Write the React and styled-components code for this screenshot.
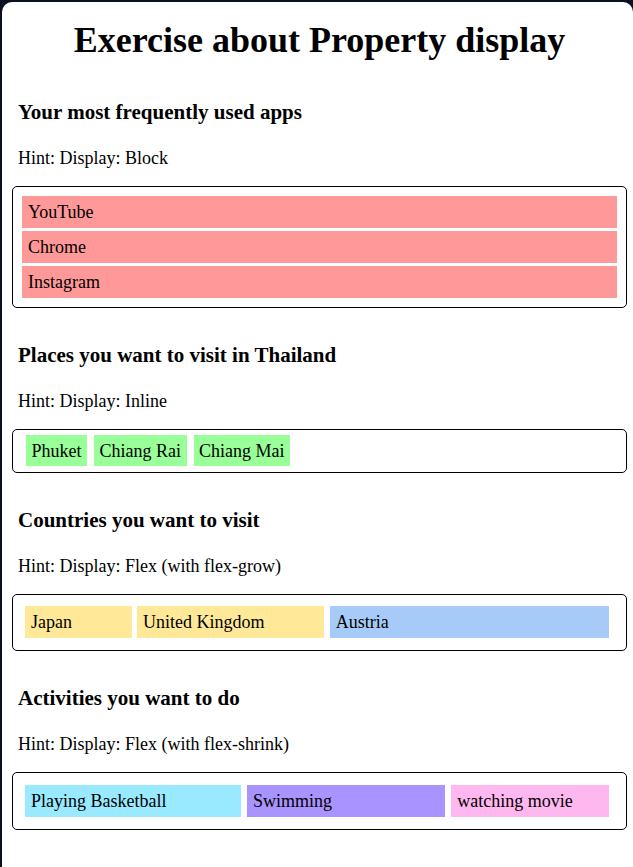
import styled, { createGlobalStyle } from "styled-components";

const GlobalStyle = createGlobalStyle`
	html, body {
		margin: 0;
		padding: 0;
		background: #0b1020;
	}
	body {
		font-family: "Liberation Serif", "Times New Roman", serif;
		font-size: 18px;
		color: #000;
	}
`;

const Page = styled.div`
	padding: 2px 0 0 2px;
	min-height: 100vh;
	box-sizing: border-box;
`;

const Card = styled.div`
	background: #fff;
	border-radius: 10px;
	padding: 18px 6px 30px 10px;
	min-height: 900px;
	box-sizing: border-box;
`;

const Title = styled.h1`
	font-size: 36px;
	font-weight: bold;
	text-align: center;
	margin: 0 0 39px;
	line-height: 41px;
`;

const SectionTitle = styled.h3`
	font-size: 21px;
	font-weight: bold;
	margin: ${(props) => (props.first ? "0" : "35px")} 0 24px 6px;
	line-height: 24px;
`;

const Hint = styled.p`
	font-size: 18px;
	margin: 0 0 18px 6px;
	line-height: 20px;
`;

const Box = styled.div`
	border: 1px solid #000;
	border-radius: 5px;
	padding: ${(props) => props.pad || "9px"};
	${(props) => props.flex && `display: flex; gap: ${props.gap || "6px"};`}
`;

const BlockItem = styled.div`
	display: block;
	background: #ff9999;
	line-height: 20px;
	padding: 6px 6px;
	margin-bottom: ${(props) => (props.last ? "0" : "3px")};
`;

const InlineRow = styled.div`
	display: flex;
	gap: 7px;
`;

const InlineItem = styled.span`
	display: inline-block;
	background: #99ff99;
	line-height: 20px;
	padding: 6px 5.5px 5px;
`;

const FlexItem = styled.div`
	background: ${(props) => props.bg};
	line-height: 20px;
	padding: 6px 6px;
	flex-grow: ${(props) => props.grow || 0};
	flex-shrink: ${(props) => props.shrink || 1};
	flex-basis: ${(props) => props.basis || "auto"};
	white-space: nowrap;
	overflow: hidden;
	min-width: 0;
`;

export default function App() {
	return (
		<>
			<GlobalStyle />
			<Page>
				<Card>
					<Title>Exercise about Property display</Title>

					<SectionTitle first>Your most frequently used apps</SectionTitle>
					<Hint>Hint: Display: Block</Hint>
					<Box>
						<BlockItem>YouTube</BlockItem>
						<BlockItem>Chrome</BlockItem>
						<BlockItem last>Instagram</BlockItem>
					</Box>

					<SectionTitle>Places you want to visit in Thailand</SectionTitle>
					<Hint>Hint: Display: Inline</Hint>
					<Box pad="5px 13px 6px">
						<InlineRow>
							<InlineItem>Phuket</InlineItem>
							<InlineItem>Chiang Rai</InlineItem>
							<InlineItem>Chiang Mai</InlineItem>
						</InlineRow>
					</Box>

					<SectionTitle>Countries you want to visit</SectionTitle>
					<Hint>Hint: Display: Flex (with flex-grow)</Hint>
					<Box flex gap="5.5px" pad="11px 17px 12px 12px">
						<FlexItem bg="#ffe999" grow={1}>Japan</FlexItem>
						<FlexItem bg="#ffe999" grow={1}>United Kingdom</FlexItem>
						<FlexItem bg="#a6cbf9" grow={4}>Austria</FlexItem>
					</Box>

					<SectionTitle>Activities you want to do</SectionTitle>
					<Hint>Hint: Display: Flex (with flex-shrink)</Hint>
					<Box flex gap="6px" pad="12px 17px 12px 12px">
						<FlexItem bg="#99e9ff" shrink={1} basis="260px">Playing Basketball</FlexItem>
						<FlexItem bg="#a993ff" shrink={1.32} basis="260px">Swimming</FlexItem>
						<FlexItem bg="#ffb8ef" shrink={2.04} basis="260px">watching movie</FlexItem>
					</Box>
				</Card>
			</Page>
		</>
	);
}
